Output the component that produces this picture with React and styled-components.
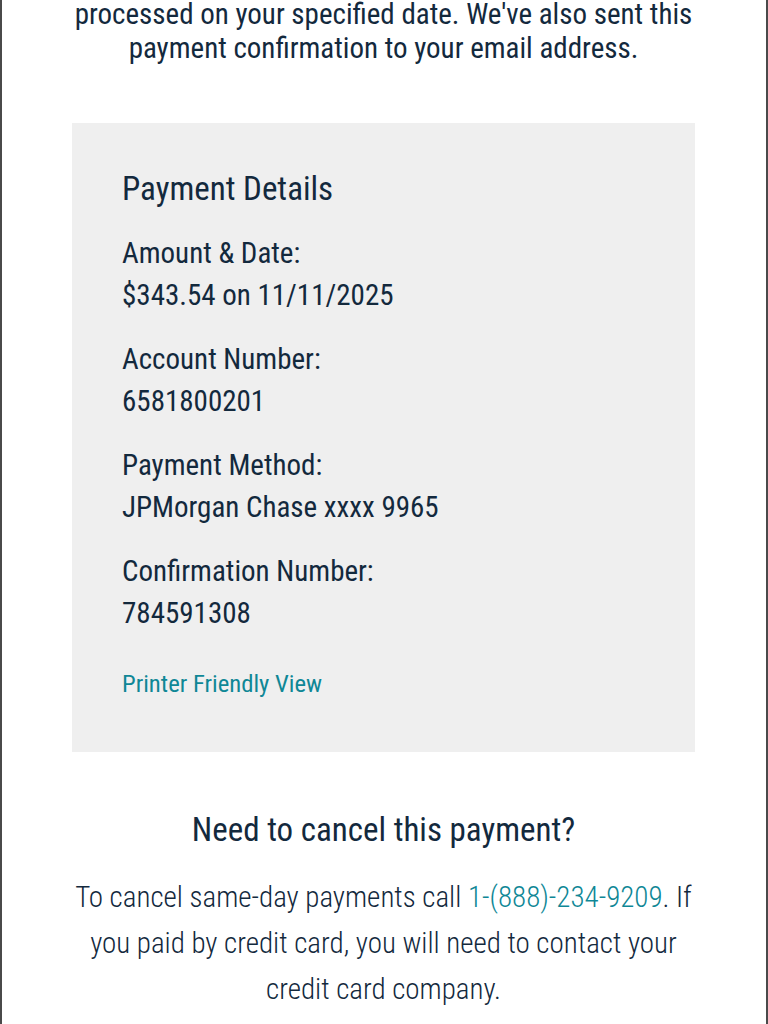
import React from "react";
import styled, { createGlobalStyle } from "styled-components";

const GlobalStyle = createGlobalStyle`
  html, body {
    margin: 0;
    padding: 0;
    background: #ffffff;
  }
  body {
    font-family: "Roboto Condensed", Roboto, "Noto Sans", "Liberation Sans", sans-serif;
    color: #13293d;
  }
`;

const Page = styled.div`
  min-height: 1024px;
  box-sizing: border-box;
  border-left: 2px solid #4a4a4a;
  border-right: 2px solid #4a4a4a;
  padding: 0 71px 40px 70px;
  overflow: hidden;
`;

const Intro = styled.p`
  margin: -3px 0 0;
  font-size: 29px;
  line-height: 34px;
  text-align: center;
  color: #13293d;
`;

const DetailsBox = styled.section`
  margin-top: 58px;
  background-color: #efefef;
  padding: 44px 50px 50px;
  height: 629px;
  box-sizing: border-box;
`;

const BoxTitle = styled.h2`
  margin: 0 0 21px;
  font-size: 33px;
  font-weight: 400;
  line-height: 44px;
  color: #13293d;
`;

const Field = styled.div`
  margin-bottom: 22px;
`;

const Line = styled.div`
  font-size: 29px;
  line-height: 42px;
  color: #13293d;
`;

const PrintLink = styled.a`
  display: inline-block;
  margin-top: 8px;
  font-size: 24.7px;
  line-height: 40px;
  color: #0f8796;
  text-decoration: none;
`;

const CancelTitle = styled.h3`
  margin: 56px 0 22px;
  font-size: 33px;
  font-weight: 400;
  line-height: 44px;
  text-align: center;
  color: #13293d;
`;

const CancelText = styled.p`
  margin: 0;
  font-size: 29px;
  font-weight: 300;
  line-height: 46px;
  text-align: center;
  color: #13293d;
`;

const Phone = styled.a`
  color: #0f8796;
  text-decoration: none;
`;

const fields = [
  ["Amount & Date:", "$343.54 on 11/11/2025"],
  ["Account Number:", "6581800201"],
  ["Payment Method:", "JPMorgan Chase xxxx 9965"],
  ["Confirmation Number:", "784591308"],
];

const App = () => {
  return (
    <>
      <GlobalStyle />
      <Page>
        <Intro>
          processed on your specified date. We've also sent this payment
          confirmation to your email address.
        </Intro>

        <DetailsBox>
          <BoxTitle>Payment Details</BoxTitle>
          {fields.map(([label, value]) => (
            <Field key={label}>
              <Line>{label}</Line>
              <Line>{value}</Line>
            </Field>
          ))}
          <PrintLink href="#">Printer Friendly View</PrintLink>
        </DetailsBox>

        <CancelTitle>Need to cancel this payment?</CancelTitle>
        <CancelText>
          To cancel same-day payments call <Phone href="#">1-(888)-234-9209</Phone>. If
          you paid by credit card, you will need to contact your credit card
          company.
        </CancelText>
      </Page>
    </>
  );
};

export default App;
